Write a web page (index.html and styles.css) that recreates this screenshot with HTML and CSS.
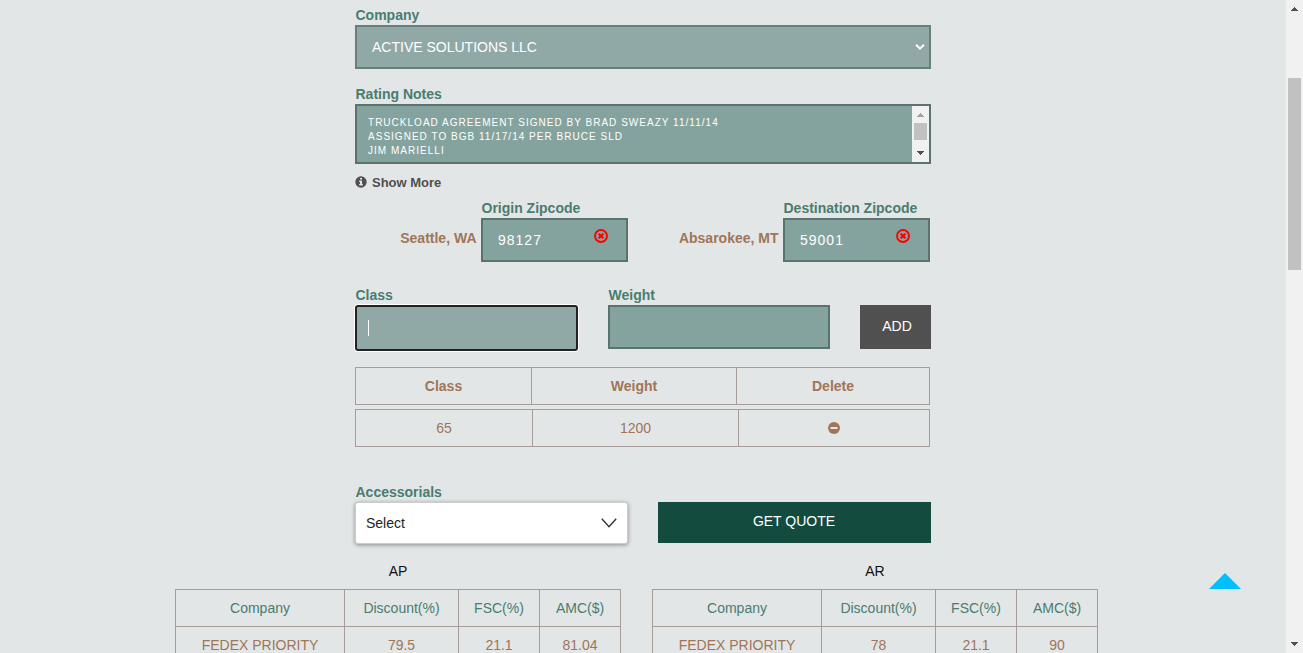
FILE: index.html
```html
<!DOCTYPE html>
<html lang="en">
<head>
<meta charset="utf-8">
<title>Rate Quote</title>
<link rel="stylesheet" href="styles.css">
</head>
<body>
<main class="page">
  <form class="quote-form">
    <div class="label">Company</div>
    <div class="field company"><span>ACTIVE SOLUTIONS LLC</span>
      <svg width="12" height="8" viewBox="0 0 12 8"><path d="M2 1.8 6 5.7 10 1.8" fill="none" stroke="#fff" stroke-width="2"/></svg>
    </div>
    <div class="label notes-label">Rating Notes</div>
    <div class="field notes">
      <div class="notes-text">TRUCKLOAD AGREEMENT SIGNED BY BRAD SWEAZY 11/11/14<br>ASSIGNED TO BGB 11/17/14 PER BRUCE SLD<br>JIM MARIELLI</div>
      <div class="scroll small"><svg class="arrow" width="7" height="4" viewBox="0 0 7 4" shape-rendering="crispEdges"><path d="M3 0h1v1h1v1h1v1h1v1H0V3h1V2h1V1h1z" fill="#a3a3a3"/></svg><i class="thumb"></i><svg class="arrow down" width="7" height="4" viewBox="0 0 7 4" shape-rendering="crispEdges"><path d="M0 0h7v1H6v1H5v1H4v1H3V3H2V2H1V1H0z" fill="#505050"/></svg></div>
    </div>
    <div class="more">
      <svg width="12" height="12" viewBox="0 0 12 12"><circle cx="6" cy="6" r="5.7" fill="#505050"/><path d="M5 2h2v1.6H5zM4.2 4.6H7v3.5h.8v1.3H4.2V8.1H5V5.9h-.8z" fill="#e2e6e6"/></svg>
      <span>Show More</span>
    </div>
    <div class="zips">
      <span class="city">Seattle, WA</span>
      <div class="zip"><div class="label">Origin Zipcode</div>
        <div class="field zip-field"><span>98127</span><svg width="14" height="14" viewBox="0 0 14 14"><circle cx="7" cy="7" r="6" fill="none" stroke="#f00" stroke-width="1.9"/><path d="m4.7 4.7 4.6 4.6m0-4.6L4.7 9.3" stroke="#f00" stroke-width="2.3"/></svg></div></div>
      <span class="city">Absarokee, MT</span>
      <div class="zip"><div class="label">Destination Zipcode</div>
        <div class="field zip-field"><span>59001</span><svg width="14" height="14" viewBox="0 0 14 14"><circle cx="7" cy="7" r="6" fill="none" stroke="#f00" stroke-width="1.9"/><path d="m4.7 4.7 4.6 4.6m0-4.6L4.7 9.3" stroke="#f00" stroke-width="2.3"/></svg></div></div>
    </div>
    <div class="entry">
      <div><div class="label">Class</div><div class="field focused"><i class="caret"></i></div></div>
      <div><div class="label">Weight</div><div class="field"></div></div>
      <div class="add">ADD</div>
    </div>
    <div class="row head"><span>Class</span><span>Weight</span><span>Delete</span></div>
    <div class="row item"><span>65</span><span>1200</span><span><svg width="12" height="12" viewBox="0 0 12 12"><circle cx="6" cy="6" r="6" fill="#a07558"/><path d="M2.5 5h7v2h-7z" fill="#e2e6e6"/></svg></span></div>
    <div class="actions">
      <div><div class="label">Accessorials</div>
        <div class="select"><span>Select</span><svg width="16" height="10" viewBox="0 0 16 10"><path d="m.8.8 7.2 8 7.2-8" fill="none" stroke="#333" stroke-width="1.4"/></svg></div></div>
      <div class="get">GET QUOTE</div>
    </div>
  </form>
  <section class="results">
    <div><div class="title">AP</div>
      <div class="rates">
        <b>Company</b><b>Discount(%)</b><b>FSC(%)</b><b>AMC($)</b>
        <span>FEDEX PRIORITY</span><span>79.5</span><span>21.1</span><span>81.04</span>
      </div></div>
    <div><div class="title">AR</div>
      <div class="rates">
        <b>Company</b><b>Discount(%)</b><b>FSC(%)</b><b>AMC($)</b>
        <span>FEDEX PRIORITY</span><span>78</span><span>21.1</span><span>90</span>
      </div></div>
  </section>
  <svg class="to-top" width="32" height="16" viewBox="0 0 32 16"><path d="M16 0 32 16H0z" fill="#00bfff"/></svg>
</main>
<aside class="scroll main-scroll"><svg class="arrow" width="7" height="4" viewBox="0 0 7 4" shape-rendering="crispEdges"><path d="M3 0h1v1h1v1h1v1h1v1H0V3h1V2h1V1h1z" fill="#505050"/></svg><i class="thumb"></i><svg class="arrow down" width="7" height="4" viewBox="0 0 7 4" shape-rendering="crispEdges"><path d="M0 0h7v1H6v1H5v1H4v1H3V3H2V2H1V1H0z" fill="#505050"/></svg></aside>
</body>
</html>
```
FILE: styles.css
```css
* { box-sizing: border-box; }
body {
  margin: 0;
  height: 653px;
  display: flex;
  overflow: hidden;
  background: #e2e6e6;
  font: 14px/20px "Liberation Sans", Arial, sans-serif;
}
svg { display: block; flex: none; }
.page { width: 1286px; height: 653px; overflow: hidden; position: relative; padding-top: 5px; }
.quote-form { width: 576px; margin-left: 355px; }
.label { height: 20px; padding-left: 0.5px; font-weight: bold; color: #4a7c70; white-space: nowrap; }
.field { height: 44px; border: 2px solid #5a736d; background: #85a39e; color: #fff; display: flex; }
.company { align-items: center; justify-content: space-between; padding: 0 3px 0 15px; background: #90a9a6; border-color: #6a7f7c; }
.notes-label { margin-top: 15px; }
.notes { height: 60px; justify-content: space-between; }
.notes-text { padding: 10px 0 0 11px; font-size: 10px; line-height: 14px; letter-spacing: 1.02px; }
.scroll { width: 17px; background: #f1f1f1; display: flex; flex-direction: column; align-items: center; flex: none; }
.thumb { width: 13px; background: #c1c1c1; }
.down { margin-top: auto; }
.small { padding: 7px 0; }
.small .thumb { height: 17px; margin-top: 6px; }
.main-scroll { height: 653px; padding: 7px 0; }
.main-scroll .thumb { height: 192px; margin-top: 67px; }
.more { display: flex; align-items: center; gap: 5px; height: 20px; margin-top: 8px; color: #505050; font-size: 13px; font-weight: bold; }
.more span { padding-top: 2px; }
.zips { display: grid; grid-template-columns: 121px 147px 145px 147px; column-gap: 5px; margin-top: 6px; }
.city { margin-right: -0.5px; color: #a07558; font-weight: bold; text-align: right; padding-top: 30px; white-space: nowrap; }
.zip-field { justify-content: space-between; padding: 10px 18px 0 15px; letter-spacing: 1px; }
.zip-field svg { margin-top: -1px; }
.entry { display: grid; grid-template-columns: 223px 222px 71px; column-gap: 30px; margin-top: 23px; height: 66px; }
.focused { height: 46px; background: #90a9a6; border-color: #222; border-radius: 3px; box-shadow: 0 0 0 1px #fff; padding: 13px 0 0 11px; }
.caret { width: 1px; height: 16px; background: #fff; }
.add { height: 44px; margin-top: 20px; padding-left: 3px; background: #505050; color: #fff; text-align: center; line-height: 42px; }
.row { width: 575px; height: 38px; display: grid; border: 1px solid #a89c9a; color: #a07558; text-align: center; line-height: 36px; }
.row span + span { border-left: 1px solid #a89c9a; }
.head { grid-template-columns: 175px 205px 1fr; margin-top: 16px; font-weight: bold; }
.item { grid-template-columns: 176px 206px 1fr; margin-top: 4px; }
.item svg { margin: 12px auto; }
.actions { display: grid; grid-template-columns: 273px 273px; column-gap: 30px; margin-top: 35px; }
.select { height: 42px; background: #fff; border: 1px solid #ccc; border-radius: 3px; box-shadow: 0 1px 4px rgba(0,0,0,.4); display: flex; align-items: center; justify-content: space-between; padding: 0 10px; color: #222; }
.get { margin-top: 20px; height: 41px; line-height: 38px; padding-right: 1px; text-align: center; color: #fff; background: #134c3e; }
.results { display: flex; gap: 31px; margin: 17px 0 0 175px; }
.title { height: 28px; text-align: center; color: #111; }
.rates { display: grid; grid-template-columns: 169px 114px 81px 81px; grid-auto-rows: 37px; border: solid #a89c9a; border-width: 1px 0 0 1px; text-align: center; line-height: 36px; color: #a07558; }
.rates > * { border: solid #a89c9a; border-width: 0 1px 1px 0; }
.rates b { font-weight: normal; color: #4a7c70; }
.to-top { position: absolute; left: 1209px; top: 573px; }
```
